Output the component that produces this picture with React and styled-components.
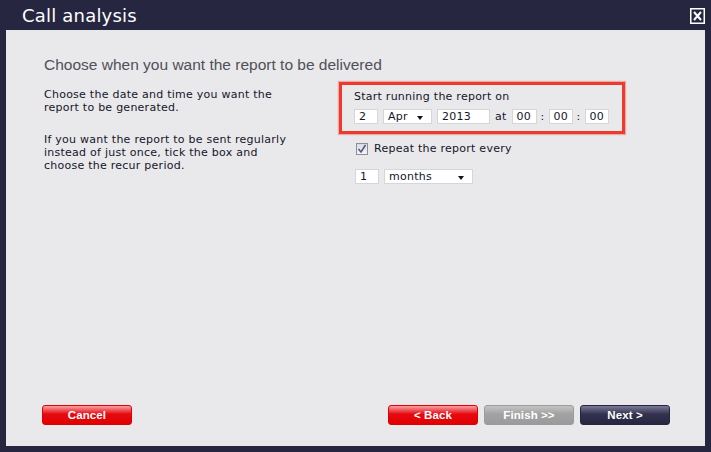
import React from 'react';
import styled, { createGlobalStyle } from 'styled-components';

const GlobalStyle = createGlobalStyle`
  html, body {
    margin: 0;
    padding: 0;
    background: #262641;
  }
`

const Window = styled.div`
    width: 711px;
    height: 452px;
    background: #262641;
    display: flex;
    flex-direction: column;
    box-sizing: border-box;
`

const TitleBar = styled.div`
    height: 30px;
    display: flex;
    flex-direction: row;
    justify-content: space-between;
    align-items: center;
    padding: 0 6px 0 22px;
    box-sizing: border-box;
`

const Title = styled.h1`
    margin: 0;
    color: white;
    font-family: "DejaVu Sans", Verdana, sans-serif;
    font-weight: normal;
    font-size: 18px;
    letter-spacing: 0.2px;
    padding-top: 1px;
`

const CloseButton = styled.button`
    width: 15px;
    height: 16px;
    padding: 0;
    border: none;
    background: none;
    display: flex;
    margin-top: 1px;
`

const Content = styled.div`
    flex: 1;
    margin: 0 6px 6px 6px;
    background: #e9e9eb;
    display: flex;
    flex-direction: column;
    padding: 0 35px 21px 36px;
`

const Main = styled.div`
    padding-left: 2px;
    padding-top: 26px;
`

const Heading = styled.h2`
    margin: 0;
    font-family: "Liberation Sans", Arial, sans-serif;
    font-weight: normal;
    font-size: 15.5px;
    line-height: 18px;
    color: #505058;
`

const Columns = styled.div`
    display: flex;
    flex-direction: row;
    margin-top: 8px;
`

const LeftCol = styled.div`
    width: 295px;
    padding-top: 6px;
`

const textFont = `
    font-family: "DejaVu Sans", Verdana, sans-serif;
    font-size: 11px;
    letter-spacing: 0.25px;
    color: #15152a;
`

const Para = styled.p`
    ${textFont}
    margin: 0 0 19px 0;
    line-height: 13px;
`

const RightCol = styled.div`
    display: flex;
    flex-direction: column;
`

const Highlight = styled.div`
    width: 286px;
    box-sizing: border-box;
    border: 3px solid #ee3a2c;
    box-shadow: 0 0 1px 1px rgba(238, 58, 44, 0.35);
    padding: 5px 10px 7px 12px;
    display: flex;
    flex-direction: column;
    gap: 6px;
`

const Label = styled.span`
    ${textFont}
    line-height: 13px;
`

const FieldRow = styled.div`
    display: flex;
    flex-direction: row;
    align-items: center;
    gap: 5px;
    margin-left: ${p => p.$indent || 0}px;
`

const Field = styled.div`
    ${textFont}
    flex-shrink: 0;
    width: ${p => p.$w}px;
    height: 15px;
    box-sizing: border-box;
    background: white;
    border: 1px solid #d6d6da;
    line-height: 13px;
    padding-left: 4px;
    position: relative;
    display: flex;
    align-items: center;
`

const Arrow = styled.span`
    position: absolute;
    right: 8px;
    top: 6px;
    width: 0;
    height: 0;
    border-left: 3.5px solid transparent;
    border-right: 3.5px solid transparent;
    border-top: 4px solid #111;
`

const Sep = styled.span`
    ${textFont}
    flex-shrink: 0;
    margin: 0 ${p => p.$pad || 0}px;
`

const CheckRow = styled.label`
    ${textFont}
    display: flex;
    flex-direction: row;
    align-items: center;
    gap: 6px;
    margin: 8px 0 0 17px;
`

const CheckBox = styled.span`
    width: 12px;
    height: 12px;
    box-sizing: border-box;
    border: 1px solid #8e8e96;
    background: linear-gradient(#dcdce2, #f4f4f6);
    display: flex;
    align-items: center;
    justify-content: center;
`

const Footer = styled.div`
    margin-top: auto;
    display: flex;
    flex-direction: row;
    align-items: center;
    gap: 6px;
`

const Spacer = styled.div`
    flex: 1;
`

const palette = {
    red: ['#f7a0a4', '#e60a10', '#e00000'],
    grey: ['#c4c4c4', '#a2a2a2', '#9b9b9b'],
    navy: ['#7a7a96', '#33334f', '#26263f'],
}

const Button = styled.button`
    width: 90px;
    height: 20px;
    border: 1px solid ${p => palette[p.$tone][2]};
    border-radius: 3px;
    background: linear-gradient(${p => palette[p.$tone][0]} 0%, ${p => palette[p.$tone][1]} 45%, ${p => palette[p.$tone][2]} 100%);
    color: white;
    font-family: "Liberation Sans", Arial, sans-serif;
    font-weight: bold;
    font-size: 11.5px;
    padding: 0;
    letter-spacing: 0.1px;
`

const App = () => {
    return (
        <>
            <GlobalStyle />
            <Window>
                <TitleBar>
                    <Title>Call analysis</Title>
                    <CloseButton aria-label="close">
                        <svg width="15" height="16" viewBox="0 0 15 16">
                            <rect x="0.75" y="0.75" width="13.5" height="14.5" fill="none" stroke="white" strokeWidth="1.5" />
                            <path d="M4 4 L11 12 M11 4 L4 12" stroke="white" strokeWidth="2" />
                        </svg>
                    </CloseButton>
                </TitleBar>
                <Content>
                    <Main>
                        <Heading>Choose when you want the report to be delivered</Heading>
                        <Columns>
                            <LeftCol>
                                <Para>Choose the date and time you want the<br />report to be generated.</Para>
                                <Para>If you want the report to be sent regularly<br />instead of just once, tick the box and<br />choose the recur period.</Para>
                            </LeftCol>
                            <RightCol>
                                <Highlight>
                                    <Label>Start running the report on</Label>
                                    <FieldRow>
                                        <Field $w={24}>2</Field>
                                        <Field $w={49}>Apr<Arrow /></Field>
                                        <Field $w={53}>2013</Field>
                                        <Sep>at</Sep>
                                        <Field $w={25}>00</Field>
                                        <Sep $pad={-1}>:</Sep>
                                        <Field $w={24}>00</Field>
                                        <Sep $pad={-1}>:</Sep>
                                        <Field $w={24}>00</Field>
                                    </FieldRow>
                                </Highlight>
                                <CheckRow>
                                    <CheckBox>
                                        <svg width="10" height="10" viewBox="0 0 10 10">
                                            <path d="M1.5 5 L4 8 L8.5 1" fill="none" stroke="#4b5a8c" strokeWidth="1.6" />
                                        </svg>
                                    </CheckBox>
                                    Repeat the report every
                                </CheckRow>
                                <FieldRow $indent={16} style={{ marginTop: 14 }}>
                                    <Field $w={24}>1</Field>
                                    <Field $w={89}>months<Arrow /></Field>
                                </FieldRow>
                            </RightCol>
                        </Columns>
                    </Main>
                    <Footer>
                        <Button $tone="red">Cancel</Button>
                        <Spacer />
                        <Button $tone="red">&lt; Back</Button>
                        <Button $tone="grey">Finish &gt;&gt;</Button>
                        <Button $tone="navy">Next &gt;</Button>
                    </Footer>
                </Content>
            </Window>
        </>
    );
}

export default App;
